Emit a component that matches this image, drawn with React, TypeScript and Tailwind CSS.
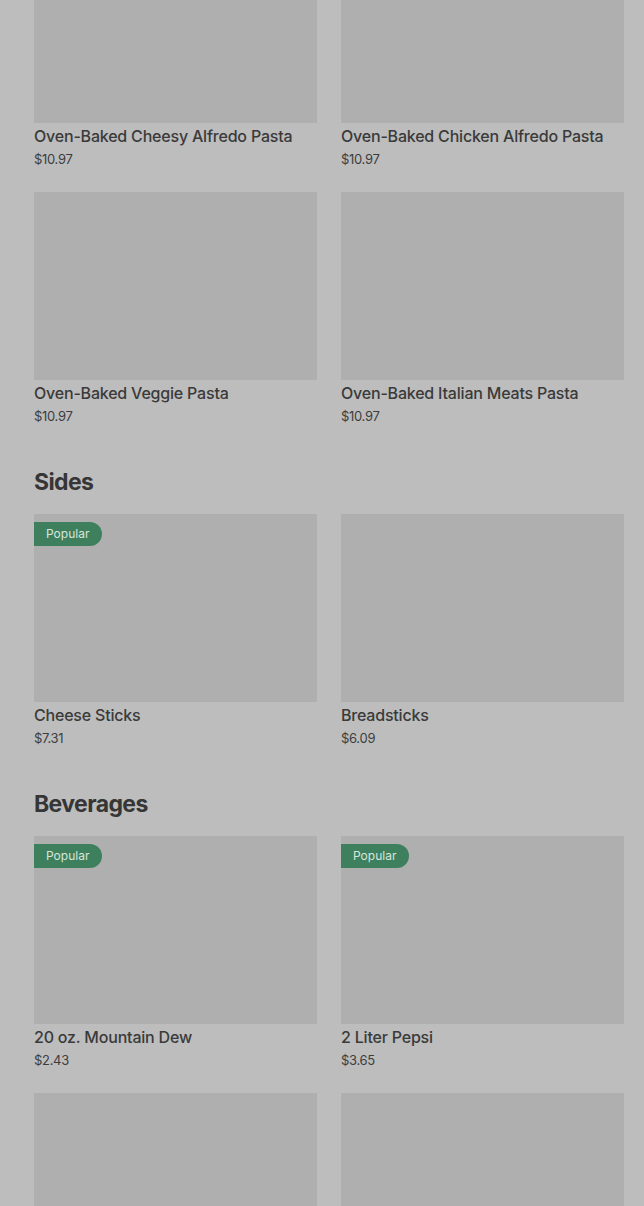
type Item = { name: string; price: string; popular?: boolean };

const pasta: Item[] = [
  { name: "Oven-Baked Cheesy Alfredo Pasta", price: "$10.97" },
  { name: "Oven-Baked Chicken Alfredo Pasta", price: "$10.97" },
  { name: "Oven-Baked Veggie Pasta", price: "$10.97" },
  { name: "Oven-Baked Italian Meats Pasta", price: "$10.97" },
];

const sides: Item[] = [
  { name: "Cheese Sticks", price: "$7.31", popular: true },
  { name: "Breadsticks", price: "$6.09" },
];

// last row is cut off by the viewport, only the pictures show
const beverages: Item[] = [
  { name: "20 oz. Mountain Dew", price: "$2.43", popular: true },
  { name: "2 Liter Pepsi", price: "$3.65", popular: true },
  { name: "", price: "" },
  { name: "", price: "" },
];

function MenuCard({ item }: { item: Item }) {
  return (
    <div className="flex flex-col">
      <div className="relative h-[188px] bg-[#afafaf]">
        {item.popular && (
          <div className="absolute left-0 top-2 flex h-6 w-[68px] items-center rounded-r-full bg-[#3e805d] pl-3 text-[12px] text-[#d7e6dd]">
            Popular
          </div>
        )}
      </div>
      {item.name && (
        <>
          <div className="mt-[2px] text-[16px] leading-[22px] font-medium tracking-[-0.2px] text-[#3a3a3a]">{item.name}</div>
          <div className="mt-[3px] text-[13px] leading-[18px] tracking-[-0.3px] text-[#3d3d3d]">{item.price}</div>
        </>
      )}
    </div>
  );
}

function Grid({ items }: { items: Item[] }) {
  return (
    <div className="grid grid-cols-2 gap-x-6 gap-y-6">
      {items.map((it, i) => (
        <MenuCard key={i} item={it} />
      ))}
    </div>
  );
}

function Section({ title, items }: { title: string; items: Item[] }) {
  return (
    <section className="mt-[41px]">
      <h2 className="mb-4 text-[23px] leading-8 font-bold tracking-[-0.6px] text-[#363636]">{title}</h2>
      <Grid items={items} />
    </section>
  );
}

export default function App() {
  return (
    <div className="h-[1206px] overflow-hidden bg-[#bdbdbd] font-['Inter',sans-serif]">
      <div className="mt-[-65px] pl-[34px] pr-5">
        <Grid items={pasta} />
        <Section title="Sides" items={sides} />
        <Section title="Beverages" items={beverages} />
      </div>
    </div>
  );
}
